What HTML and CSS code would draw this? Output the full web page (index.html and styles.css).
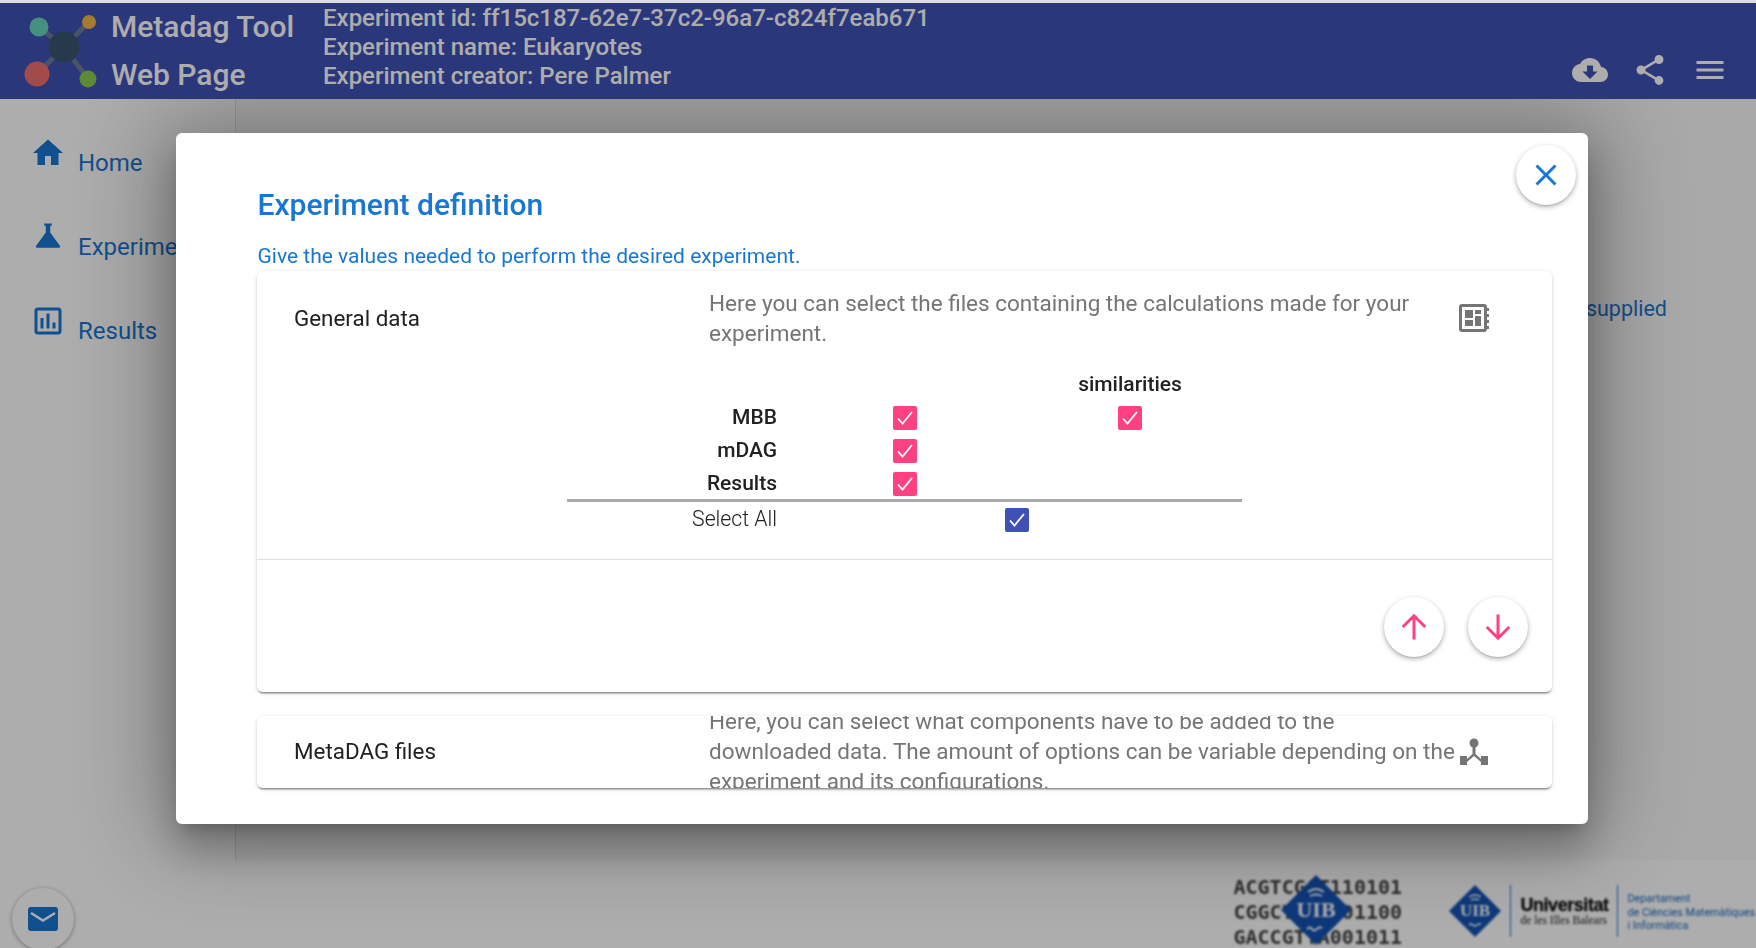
FILE: index.html
```html
<!DOCTYPE html>
<html lang="en">
<head>
<meta charset="utf-8">
<title>Metadag Tool Web Page</title>
<link rel="stylesheet" href="styles.css">
</head>
<body>
<div class="page">
  <header class="topbar">
    <svg class="brand-logo" viewBox="0 0 100 96" aria-hidden="true">
      <g class="brand-links"><line x1="39" y1="24" x2="64" y2="44"/><line x1="89" y1="19" x2="64" y2="44"/><line x1="37" y1="71" x2="64" y2="44"/><line x1="88" y1="76" x2="64" y2="44"/></g>
      <circle cx="39" cy="24" r="9.500" fill="#66d5bb"/>
      <circle cx="89" cy="19" r="7" fill="#f5b544"/>
      <circle cx="64" cy="44" r="15.500" fill="#38566f"/>
      <circle cx="37" cy="71" r="12.500" fill="#ee6f6f"/>
      <circle cx="88" cy="76" r="8.500" fill="#8bcb52"/>
    </svg>
    <div class="brand-title"><span>Metadag Tool</span><span>Web Page</span></div>
    <div class="exp-info">
      <span>Experiment id: ff15c187-62e7-37c2-96a7-c824f7eab671</span>
      <span>Experiment name: Eukaryotes</span>
      <span>Experiment creator: Pere Palmer</span>
    </div>
    <div class="top-actions">
      <svg class="icon-36" viewBox="0 0 24 24"><path d="M19.35 10.04C18.67 6.59 15.64 4 12 4 9.11 4 6.6 5.64 5.35 8.04 2.34 8.36 0 10.91 0 14c0 3.31 2.69 6 6 6h13c2.76 0 5-2.24 5-5 0-2.64-2.05-4.78-4.65-4.96zM17 13l-5 5-5-5h3V9h4v4h3z"/></svg>
      <svg class="icon-36" viewBox="0 0 24 24"><path d="M18 16.08c-.76 0-1.44.3-1.96.77L8.91 12.7c.05-.23.09-.46.09-.7s-.04-.47-.09-.7l7.05-4.11c.54.5 1.25.81 2.04.81 1.66 0 3-1.34 3-3s-1.34-3-3-3-3 1.34-3 3c0 .24.04.47.09.7L8.04 9.81C7.5 9.31 6.79 9 6 9c-1.66 0-3 1.34-3 3s1.34 3 3 3c.79 0 1.5-.31 2.04-.81l7.12 4.16c-.05.21-.08.43-.08.65 0 1.61 1.31 2.92 2.92 2.92 1.61 0 2.92-1.31 2.92-2.92s-1.31-2.92-2.92-2.92z"/></svg>
      <svg class="icon-36" viewBox="0 0 24 24"><path d="M3 18h18v-2H3v2zm0-5h18v-2H3v2zm0-7v2h18V6H3z"/></svg>
    </div>
  </header>

  <div class="workspace">
    <nav class="sidenav">
      <a class="nav-item"><svg class="icon-36" viewBox="0 0 24 24"><path d="M10 20v-6h4v6h5v-8h3L12 3 2 12h3v8z"/></svg><span>Home</span></a>
      <a class="nav-item"><svg class="icon-36" viewBox="0 0 24 24"><path d="M9.5 3h5v1.5h-1V9L20 18a.8.8 0 0 1-.6 1.2H4.600a.8.8 0 0 1-.6-1.200L10.500 9V4.500h-1z"/></svg><span>Experiments</span></a>
      <a class="nav-item"><svg class="icon-36" viewBox="0 0 24 24"><path d="M19 3H5c-1.100 0-2 .9-2 2v14c0 1.100.9 2 2 2h14c1.100 0 2-.9 2-2V5c0-1.100-.9-2-2-2zm0 16H5V5h14v14zM7 10h2v7H7zm4-3h2v10h-2zm4 6h2v4h-2z"/></svg><span>Results</span></a>
    </nav>
    <main class="content"><p class="intro">supplied</p></main>
  </div>

  <footer class="footer">
    <button class="mail-fab" type="button">
      <svg class="mail-icon" viewBox="0 0 30 24"><rect width="30" height="24" rx="3" fill="#1976d2"/><path d="M3 6l12 7.500L27 6" fill="none" stroke="#fff" stroke-width="2.500"/></svg>
    </button>
    <div class="logos">
      <div class="dna-logo">
        <div class="dna-text"><span>ACGTCGAT110101</span><span>CGGCTAGC001100</span><span>GACCGTTA001011</span></div>
        <svg class="dna-diamond" viewBox="0 0 70 70">
          <path d="M35 0l35 35-35 35L0 35z" fill="#1353b5"/>
          <path d="M27 17q8-6 16 0M29 21q6-3 12 0" stroke="#fff" stroke-width="1.800" fill="none"/>
          <text x="35" y="42" class="uib-text">UIB</text>
          <path d="M26 54q3-3 5 0t5 0 5-1" stroke="#fff" stroke-width="1.800" fill="none"/>
        </svg>
      </div>
      <div class="uni-logo">
        <svg class="uni-diamond" viewBox="0 0 52 52">
          <path d="M26 0l26 26-26 26L0 26z" fill="#1353b5"/>
          <path d="M20 12q6-4 12 0M22 15q4-2 8 0" stroke="#fff" stroke-width="1.500" fill="none"/>
          <text x="26" y="31" class="uib-text small">UIB</text>
          <path d="M20 40q2-2 4 0t4 0 4-1" stroke="#fff" stroke-width="1.500" fill="none"/>
        </svg>
        <div class="uni-name"><strong>Universitat</strong><span>de les Illes Balears</span></div>
        <div class="uni-dept"><span>Departament</span><span>de Ciències Matemàtiques</span><span>i Informàtica</span></div>
      </div>
    </div>
  </footer>
</div>

<div class="backdrop"></div>

<section class="dialog">
  <button class="round-btn close-btn" type="button">
    <svg viewBox="0 0 24 24" class="close-icon"><path d="M19 6.410L17.590 5 12 10.590 6.410 5 5 6.410 10.590 12 5 17.590 6.410 19 12 13.410 17.590 19 19 17.590 13.410 12z"/></svg>
  </button>
  <h2 class="dialog-title">Experiment definition</h2>
  <p class="dialog-sub">Give the values needed to perform the desired experiment.</p>

  <article class="panel">
    <div class="panel-head open">
      <span class="panel-name">General data</span>
      <span class="panel-desc">Here you can select the files containing the calculations made for your experiment.</span>
      <svg class="panel-icon" viewBox="0 0 30 28"><path fill-rule="evenodd" d="M3 0h22a3 3 0 0 1 3 3v1h2v3h-2v3h2v3h-2v3h2v3h-2v3h2v3h-2v0a3 3 0 0 1-3 3H3a3 3 0 0 1-3-3V3a3 3 0 0 1 3-3zm0 3v22h22V3zM6 6h8v8H6zm10 0h6v4h-6zm0 6h6v10h-6zM6 16h8v6H6z"/></svg>
    </div>
    <div class="panel-body">
      <div class="matrix">
        <span></span><span></span><b class="col-head">similarities</b>
        <b class="row-head">MBB</b>
        <span class="cell"><i class="check pink"><svg viewBox="0 0 24 24"><path d="M5 12.500l4.500 5L19 6"/></svg></i></span>
        <span class="cell"><i class="check pink"><svg viewBox="0 0 24 24"><path d="M5 12.500l4.500 5L19 6"/></svg></i></span>
        <b class="row-head">mDAG</b>
        <span class="cell"><i class="check pink"><svg viewBox="0 0 24 24"><path d="M5 12.500l4.500 5L19 6"/></svg></i></span>
        <span></span>
        <b class="row-head">Results</b>
        <span class="cell"><i class="check pink"><svg viewBox="0 0 24 24"><path d="M5 12.500l4.500 5L19 6"/></svg></i></span>
        <span></span>
      </div>
      <div class="select-all">
        <span class="select-label">Select All</span>
        <i class="check indigo"><svg viewBox="0 0 24 24"><path d="M5 12.500l4.500 5L19 6"/></svg></i>
      </div>
    </div>
    <div class="panel-actions">
      <button class="round-btn" type="button"><svg class="arrow-icon" viewBox="0 0 24 24"><path d="M12 22V3M3 12l9-9 9 9"/></svg></button>
      <button class="round-btn" type="button"><svg class="arrow-icon" viewBox="0 0 24 24"><path d="M12 2v19M3 12l9 9 9-9"/></svg></button>
    </div>
  </article>

  <article class="panel collapsed">
    <div class="panel-head">
      <span class="panel-name">MetaDAG files</span>
      <span class="panel-desc">Here, you can select what components have to be added to the downloaded data. The amount of options can be variable depending on the experiment and its configurations.</span>
      <svg class="panel-icon" viewBox="0 0 28 28"><circle cx="14" cy="5" r="4.500"/><path d="M0 18h7v3l5.500-5V9h3v7l5.500 5v-3h7v9h-7v-3l-7-6-7 6v3H0z"/></svg>
    </div>
  </article>
</section>
</body>
</html>
```
FILE: styles.css
```css
* { box-sizing: border-box; }
html, body { margin: 0; height: 100%; overflow: hidden; }
body { background: #fff; font-family: Roboto, "Liberation Sans", sans-serif; color: #212121; }

.page { height: 948px; border-top: 3px solid #ddd; display: flex; flex-direction: column; }

.topbar { height: 96px; background: #3f51b5; color: #fff; display: flex; flex: none; font-weight: 500; }
.brand-logo { width: 100px; height: 96px; flex: none; }
.brand-links line { stroke: #6d7d99; stroke-width: 5; }
.brand-title { width: 212px; margin-left: 11px; display: flex; flex-direction: column; font-size: 30px; line-height: 48px; flex: none; }
.exp-info { display: flex; flex-direction: column; font-size: 24px; line-height: 29px; padding-top: 1px; }
.top-actions { margin-left: auto; padding: 49px 28px 0 0; display: flex; gap: 24px; }
.icon-36 { width: 36px; height: 36px; fill: currentColor; flex: none; }

.workspace { display: flex; height: 761px; flex: none; }
.sidenav { width: 236px; flex: none; padding: 36px 0 0 30px; border-right: 1px solid rgba(0,0,0,.12); background: #fff; }
.nav-item { height: 84px; display: flex; gap: 12px; color: #1976d2; font-size: 24px; line-height: 28px; }
.nav-item span { margin-top: 14px; }
.content { flex: 1; background: #fafafa; padding: 195px 89px 0 0; }
.intro { margin: 0; text-align: right; font-size: 21.500px; line-height: 30px; color: #1976d2; }

.footer { flex: 1; display: flex; position: relative; min-height: 0; }
.mail-fab { position: absolute; left: 12px; top: 28px; width: 62px; height: 62px; border-radius: 50%; border: 0; padding: 0; background: #fff; box-shadow: 0 1px 4px rgba(0,0,0,.35); display: flex; align-items: center; justify-content: center; }
.mail-icon { width: 30px; height: 24px; }

.logos { margin-left: auto; display: flex; filter: blur(.9px); padding-right: 1px; }
.dna-logo { position: relative; width: 169px; margin-right: 47px; }
.dna-text { padding-top: 15px; display: flex; flex-direction: column; font-family: "DejaVu Sans Mono", monospace; font-weight: 700; font-size: 20px; line-height: 25px; color: #444; }
.dna-diamond { position: absolute; left: 48px; top: 15px; width: 70px; height: 70px; }
.uib-text { font-family: "Liberation Serif", serif; font-size: 22px; font-weight: 700; fill: #fff; text-anchor: middle; }
.uib-text.small { font-size: 17px; }
.uni-logo { display: flex; align-items: flex-start; padding-top: 25px; }
.uni-diamond { width: 52px; height: 52px; flex: none; margin-right: 9px; }
.uni-name { border-left: 1px solid #1976d2; height: 52px; padding: 10px 8px 0 9px; display: flex; flex-direction: column; width: 107px; }
.uni-name strong { font-family: "Liberation Sans", sans-serif; font-size: 18px; line-height: 20px; letter-spacing: -.45px; color: #111; -webkit-text-stroke: .3px #111; }
.uni-name span { font-family: "Liberation Serif", serif; font-size: 11.500px; line-height: 10px; color: #222; white-space: nowrap; }
.uni-dept { border-left: 1px solid #1976d2; height: 52px; padding: 7px 0 0 9px; display: flex; flex-direction: column; font-size: 10.800px; line-height: 13.500px; color: #1565c0; white-space: nowrap; }

.backdrop { position: fixed; inset: 3px 0 0 0; background: rgba(0,0,0,.32); }

.dialog { position: fixed; left: 176px; top: 133px; width: 1412px; height: 691px; background: #fff; border-radius: 6px; padding: 47px 36px 0 81px;
  clip-path: inset(-34px -200px -200px -200px);
  box-shadow: 0 11px 15px -7px rgba(0,0,0,.2), 0 24px 38px 3px rgba(0,0,0,.2), 0 0 90px 22px rgba(0,0,0,.28); }
.round-btn { width: 60px; height: 60px; border-radius: 50%; border: 0; padding: 0; background: #fff; box-shadow: 0 2px 5px rgba(0,0,0,.3), 0 1px 1px rgba(0,0,0,.1); display: flex; align-items: center; justify-content: center; }
.close-btn { position: absolute; right: 12px; top: 12px; }
.close-icon { width: 36px; height: 36px; fill: #1976d2; }
.dialog-title { margin: 0 0 0 .5px; font-size: 30px; line-height: 50px; font-weight: 500; color: #1976d2; }
.dialog-sub { margin: 12px 0 0 .5px; font-size: 21px; line-height: 28px; color: #1976d2; }

.panel { background: #fff; border-radius: 6px; margin-top: 1px; box-shadow: 0 3px 2px -2px rgba(0,0,0,.35), 0 2px 2px rgba(0,0,0,.14), 0 1px 5px rgba(0,0,0,.12); height: 421px; }
.panel.collapsed { margin-top: 24px; height: 72px; overflow: hidden; }
.panel-head { display: flex; align-items: center; padding: 0 0 0 37px; height: 70px; }
.panel-head.open { height: 94px; }
.panel-name { width: 415px; flex: none; font-size: 22.400px; }
.panel-desc { width: 750px; flex: none; font-size: 22.500px; line-height: 30px; color: #757575; }
.panel-icon { width: 30px; height: 28px; flex: none; fill: #757575; }
.collapsed .panel-icon { margin-top: 2px; }

.panel-body { padding-left: 310px; height: 195px; border-bottom: 1px solid #e0e0e0; }
.matrix { width: 675px; display: grid; grid-template-columns: 210px 256px 194px; grid-auto-rows: 33px; border-bottom: 3px solid #aaa; align-items: center; padding: 2px 0 0; }
.col-head { text-align: center; font-size: 21px; font-weight: 500; }
.row-head { text-align: right; font-size: 21px; font-weight: 500; }
.cell { display: flex; justify-content: center; padding-top: 2px; }
.check { width: 24px; height: 24px; border-radius: 2px; display: block; }
.check svg { display: block; width: 24px; height: 24px; fill: none; stroke: #fff; stroke-width: 1.800; }
.pink { background: #ff4081; }
.indigo { background: #3f51b5; }
.select-all { display: flex; align-items: center; margin-top: 6px; }
.select-label { width: 211px; text-align: right; padding-right: 1px; font-size: 21.200px; font-weight: 300; margin-top: -3px; }
.select-all .check { margin-left: 227px; }

.panel-actions { display: flex; justify-content: flex-end; gap: 24px; padding: 37px 24px 0 0; }
.arrow-icon { width: 30px; height: 30px; fill: none; stroke: #ff4081; stroke-width: 2.400; }
```
